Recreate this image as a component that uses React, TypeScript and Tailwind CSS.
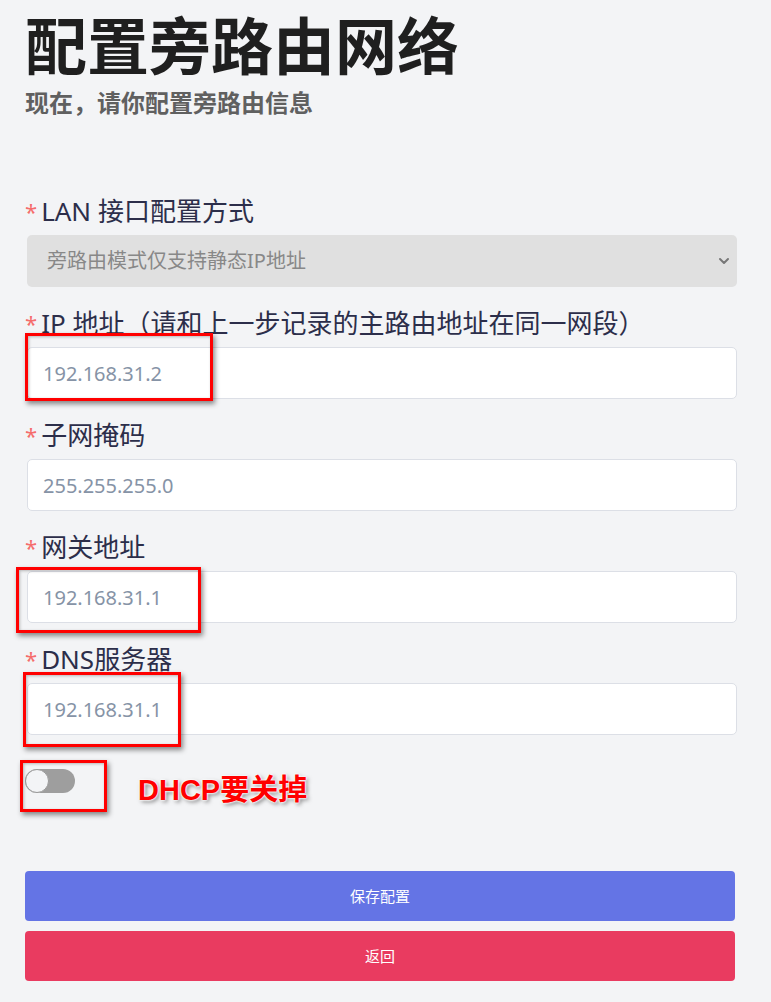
import { ChevronDown } from 'lucide-react';
import type { ReactNode } from 'react';

const font = "font-['Noto_Sans','Noto_Sans_CJK_SC',sans-serif]";

type Mark = { className: string };

function Annot({ className }: Mark) {
  return (
    <div
      className={`pointer-events-none absolute border-[3px] border-[#ff0000] shadow-[2px_3px_5px_rgba(0,0,0,0.45),inset_1px_1px_3px_rgba(0,0,0,0.25)] ${className}`}
    />
  );
}

function Field({ label, children }: { label: string; children: ReactNode }) {
  return (
    <div className="flex flex-col">
      <div className="flex h-[36px] items-center leading-[36px] text-[26px] text-[#2c2e4a]">
        <span className="mr-[4px] text-[22px] text-[#f56c6c]">*</span>
        <span>{label}</span>
      </div>
      <div className="relative mt-[6px] ml-[2px] mr-[-2px]">{children}</div>
    </div>
  );
}

function TextInput({ value }: { value: string }) {
  return (
    <input
      readOnly
      defaultValue={value}
      className="h-[52px] w-full rounded-[5px] border border-[#dcdfe6] bg-white px-[15px] text-[20px] text-[#8693a6] outline-none"
    />
  );
}

export default function App() {
  return (
    <div className={`min-h-[1002px] w-full bg-[#f3f4f6] ${font}`}>
      <div className="ml-[25px] w-[710px] pt-[15px]">
        <h1 className="text-[62px] font-bold leading-[62px] text-[#1f1f1f]">配置旁路由网络</h1>
        <p className="mt-[14px] text-[24px] font-bold leading-[24px] text-[#606060]">
          现在，请你配置旁路由信息
        </p>

        <div className="mt-[78px] flex flex-col gap-[18px]">
          <Field label="LAN 接口配置方式">
            <div className="flex h-[52px] items-center justify-between rounded-[5px] bg-[#e0e0e0] pl-[20px] pr-[5px] text-[20px] text-[#888]">
              <span>旁路由模式仅支持静态IP地址</span>
              <ChevronDown size={16} strokeWidth={3} className="text-[#777]" />
            </div>
          </Field>

          <Field label="IP 地址（请和上一步记录的主路由地址在同一网段）">
            <TextInput value="192.168.31.2" />
            <Annot className="left-[-2px] top-[-14px] h-[68px] w-[188px]" />
          </Field>

          <Field label="子网掩码">
            <TextInput value="255.255.255.0" />
          </Field>

          <Field label="网关地址">
            <TextInput value="192.168.31.1" />
            <Annot className="left-[-11px] top-[-4px] h-[66px] w-[185px]" />
          </Field>

          <Field label="DNS服务器">
            <TextInput value="192.168.31.1" />
            <Annot className="left-[-4px] top-[-11px] h-[75px] w-[158px]" />
          </Field>
        </div>

        <div className="mt-[34px] flex h-[24px] items-start">
          <div className="relative">
            <div className="flex h-[24px] w-[50px] items-center rounded-full bg-[#9e9e9e]">
              <div className="h-[24px] w-[24px] rounded-full border border-[#9a9a9a] bg-[#f3f4f6]" />
            </div>
            <Annot className="left-[-5px] top-[-9px] h-[52px] w-[87px]" />
          </div>
          <span className="ml-[63px] mt-[6px] whitespace-nowrap font-['Liberation_Sans','Noto_Sans_CJK_SC',sans-serif] text-[29px] font-bold leading-[31px] text-[#ff0000] [text-shadow:0_0_2px_#fff,0_0_2px_#fff,0_0_3px_#fff,2px_2px_4px_rgba(0,0,0,0.5)]">
            DHCP要关掉
          </span>
        </div>

        <div className="mt-[78px] flex flex-col gap-[10px]">
          <button className="h-[50px] w-full rounded-[4px] bg-[#6474e5] text-[15px] text-white">保存配置</button>
          <button className="h-[50px] w-full rounded-[4px] bg-[#e93b60] text-[15px] text-white">返回</button>
        </div>
      </div>
    </div>
  );
}
